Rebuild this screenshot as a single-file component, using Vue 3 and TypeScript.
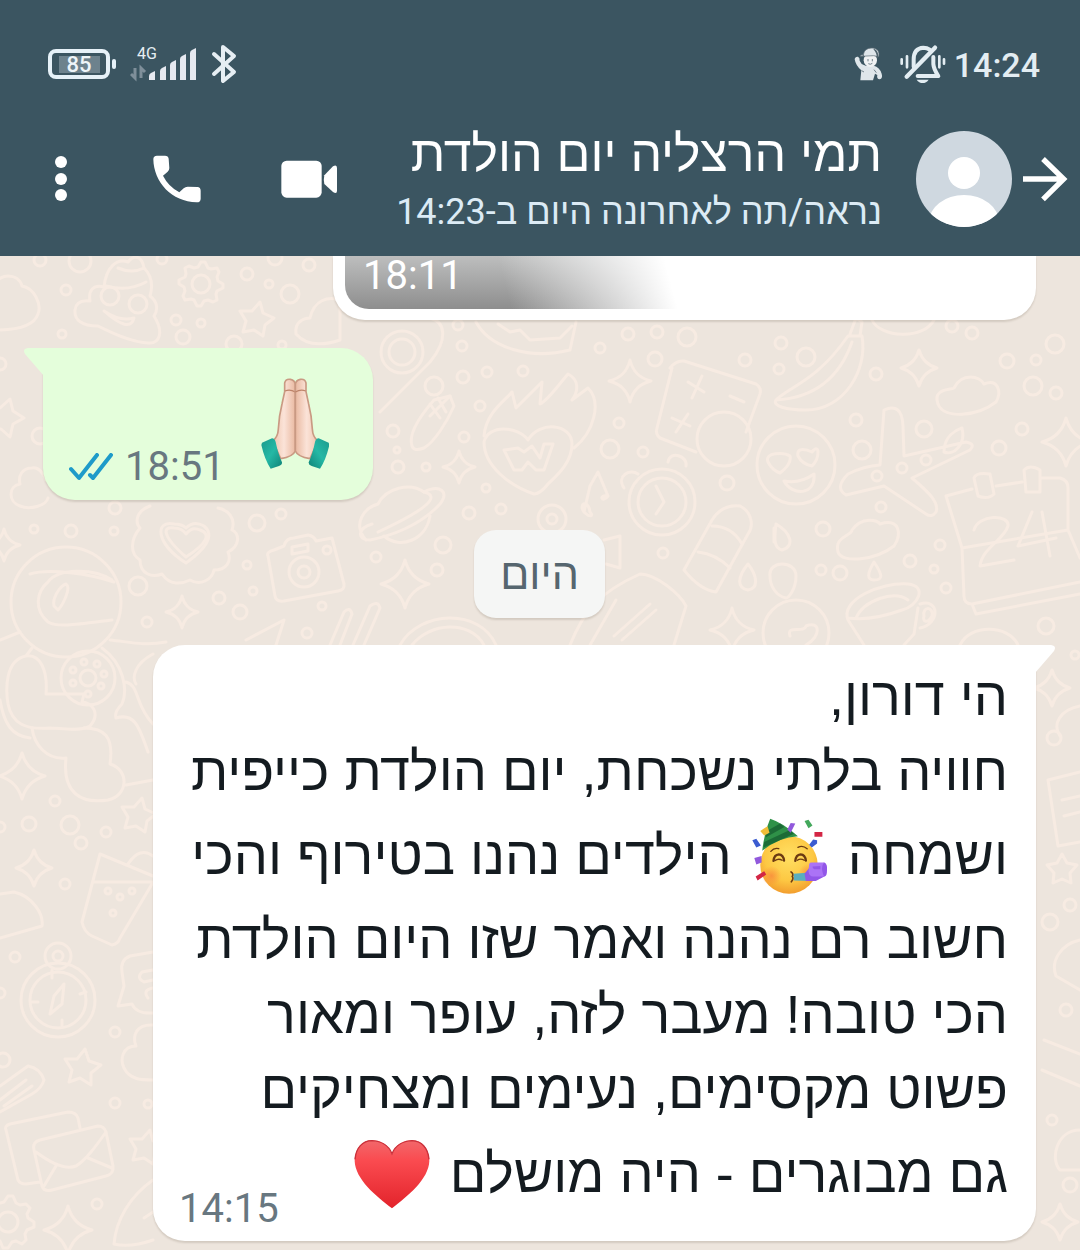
<script setup lang="ts">
type Dot = [x: number, y: number, r: number]

const contact = {
  name: 'תמי הרצליה יום הולדת',
  lastSeen: 'נראה/תה לאחרונה היום ב-14:23',
}

const signalBars: Dot[] = [
  [19, 26, 8],
  [30, 21, 13],
  [40, 15, 19],
  [50, 9, 25],
  [60, 3, 31],
]

function sparkle(x: number, y: number, r: number): string {
  const k = Math.round(r / 5)
  return `M${x} ${y - r}Q${x + k} ${y - k} ${x + r} ${y}Q${x + k} ${y + k} ${x} ${y + r}Q${x - k} ${y + k} ${x - r} ${y}Q${x - k} ${y - k} ${x} ${y - r}Z`
}

function star(x: number, y: number, r: number, turn = 0): string {
  const points: string[] = []
  for (let i = 0; i < 10; i++) {
    const a = (Math.PI / 5) * i - Math.PI / 2 + turn
    const d = i % 2 === 0 ? r : r * 0.55
    points.push(`${Math.round(x + d * Math.cos(a))} ${Math.round(y + d * Math.sin(a))}`)
  }
  return `M${points.join('L')}Z`
}

function gear(x: number, y: number, r: number, teeth: number): string {
  const points: string[] = []
  for (let i = 0; i < teeth * 4; i++) {
    const a = ((Math.PI * 2) / (teeth * 4)) * i
    const d = i % 4 < 2 ? r : r * 0.8
    points.push(`${Math.round(x + d * Math.cos(a))} ${Math.round(y + d * Math.sin(a))}`)
  }
  return `M${points.join('L')}Z`
}

const dots: Dot[] = [
  [40, 260, 6], [80, 261, 11], [162, 259, 5], [66, 290, 5], [62, 334, 4], [247, 274, 6], [269, 284, 4],
  [290, 294, 9], [309, 265, 6], [176, 320, 5], [201, 323, 4], [183, 337, 7], [275, 258, 7], [234, 344, 8],
  [282, 345, 4], [0, 364, 6], [40, 436, 8], [115, 508, 6], [34, 529, 4], [71, 531, 6], [114, 531, 4],
  [257, 523, 8], [281, 514, 5], [469, 513, 6], [443, 545, 8], [376, 557, 5], [437, 570, 6], [247, 565, 4],
  [253, 591, 4], [219, 598, 6], [240, 612, 7], [138, 586, 9], [147, 622, 5], [322, 606, 4], [307, 633, 5],
  [55, 801, 5], [29, 824, 7], [70, 825, 9], [106, 832, 5], [81, 843, 6], [0, 827, 5], [65, 884, 5],
  [15, 957, 5], [0, 993, 5], [115, 1032, 5], [3, 1060, 7], [115, 1103, 5], [148, 1104, 4], [97, 1204, 5],
  [458, 325, 5], [462, 346, 5], [463, 377, 6], [487, 372, 5], [523, 371, 5], [434, 386, 9], [480, 406, 5],
  [464, 437, 5], [393, 431, 6], [397, 450, 3], [398, 467, 6], [426, 467, 4], [486, 488, 4], [501, 509, 5],
  [552, 519, 14], [552, 519, 5], [600, 348, 5], [628, 334, 6], [657, 332, 6], [687, 337, 9], [655, 359, 7],
  [619, 423, 5], [610, 449, 9], [643, 452, 5], [663, 553, 5], [727, 483, 7], [781, 343, 6], [745, 360, 6],
  [779, 369, 5], [806, 357, 9], [876, 374, 6], [952, 326, 6], [972, 333, 6], [1055, 344, 9], [1007, 361, 7],
  [1036, 360, 5], [1033, 386, 9], [1056, 393, 6], [856, 420, 6], [862, 450, 9], [924, 429, 8], [1022, 429, 6],
  [999, 448, 7], [902, 468, 5], [926, 460, 5], [877, 476, 5], [881, 507, 5], [823, 529, 7], [940, 545, 5],
  [910, 561, 6], [934, 569, 4], [946, 588, 5], [821, 570, 5], [840, 573, 7], [1046, 626, 8], [1075, 655, 4],
  [1054, 738, 7], [1070, 905, 6], [1050, 922, 8], [1066, 1010, 6], [1052, 1120, 5], [1070, 1185, 7],
  [402, 352, 13], [402, 352, 21], [201, 284, 9], [110, 296, 9], [138, 304, 9], [662, 502, 33], [662, 502, 24],
  [796, 465, 39], [796, 633, 33], [724, 439, 27], [66, 602, 55], [88, 678, 27], [88, 678, 8], [84, 662, 3],
  [97, 664, 3], [104, 674, 3], [101, 686, 3], [73, 683, 3], [73, 670, 3], [88, 694, 3], [304, 572, 15],
  [304, 572, 6], [327, 550, 4], [58, 1000, 37], [58, 1000, 28], [58, 956, 13], [58, 956, 5], [8, 1222, 10],
  [108, 891, 3], [120, 897, 3], [132, 891, 3], [113, 913, 3],
]

const doodles: string[] = [
  'M-4 284C-2 274 18 272 22 286C34 288 42 304 38 314C34 326 18 330-4 330',
  'M104 287C106 268 116 258 128 262C134 254 142 256 144 268C152 276 153 286 150 296C158 302 158 310 154 316C164 332 160 344 148 343C130 342 110 332 98 326C82 326 74 320 75 310C76 302 82 300 90 301C88 290 94 284 104 287Z',
  'M106 286Q128 292 146 282M118 268Q132 274 144 268M104 311Q120 322 134 318Q130 334 104 311Z',
  'M296 334C294 322 304 318 310 318C314 300 328 296 340 300V340Q310 350 296 334Z',
  gear(201, 284, 22, 8),
  star(256, 320, 18, 0.2),
  star(4, 418, 20, 0.3),
  'M32 468C40 466 44 476 46 480M32 468C22 468 18 476 20 484C8 486 8 502 20 506C30 510 46 506 48 498',
  sparkle(4, 545, 16),
  'M186 557C162 536 162 526 174 528Q182 528 186 534Q192 526 200 530C212 534 206 544 186 557Z',
  'M186 563C156 544 154 520 174 524Q182 524 186 528Q194 520 204 526C216 536 204 550 186 563Z',
  'M150 506C134 512 136 524 140 528C130 540 130 554 140 560C140 574 152 578 162 574C170 586 182 584 190 580C200 586 212 580 214 570C226 570 232 562 228 552C240 546 240 534 232 530C236 518 228 510 218 508',
  'M268 556Q266 552 274 550L284 546Q286 538 294 538L308 535Q314 536 316 541L332 538L344 584Q345 590 338 591L284 601Q276 602 275 596Z',
  'M292 547L308 544V551L292 554Z',
  sparkle(182, 612, 16),
  'M246 640L284 620L276 645M330 645L344 612Q350 606 352 614L340 645M353 645L370 606Q378 600 380 608L364 645',
  sparkle(405, 584, 24),
  'M366 540C352 524 364 508 378 504C386 488 410 482 424 492C440 484 450 492 440 504C420 526 390 536 370 540C356 540 358 528 372 524',
  'M384 536C400 550 426 540 430 516M424 492C440 496 430 508 378 532',
  'M400 645C420 610 480 608 496 645M412 645C430 622 470 620 484 645',
  'M476 322C490 348 530 360 570 350L576 322M498 324L510 332L520 330L530 340L560 338L572 326',
  'M380 412L430 362C448 340 446 322 430 318',
  'M412 446C408 434 420 416 434 400L450 396L454 406C446 424 434 442 424 448Q414 452 412 446Z',
  'M430 404L440 418M438 398L446 412M430 416L450 396',
  'M484 436C486 412 506 400 512 392L516 408L542 382L540 404C548 400 556 388 568 374C580 380 578 392 572 400L588 388C602 402 594 432 574 448',
  'M534 494C510 486 484 466 484 442C488 424 518 426 528 440C540 420 572 424 572 444C572 464 554 478 548 484Q540 494 534 494Z',
  'M504 450L514 470H522L528 462L536 470H544L553 444H544L540 458L532 446L524 452L518 448Z',
  sparkle(630, 381, 21),
  sparkle(459, 467, 16),
  'M584 512C578 504 588 498 590 512C594 516 590 518 584 512L590 486L598 472L608 496C602 504 598 494 608 496',
  'M670 368Q676 360 684 361L756 384Q762 388 760 394L746 432M696 452L660 438Q655 434 657 428L672 368',
  'M688 382L704 392M702 376L692 398M672 418L690 426M688 414L676 432M730 396L744 402',
  'M624 488C616 476 630 468 638 474M668 462C670 450 688 456 686 466',
  'M656 486L664 502L656 514',
  'M684 570L712 520Q722 504 740 506C752 512 754 526 748 534L716 592Q700 590 684 570ZM712 526Q732 526 742 544M698 552Q716 554 730 568',
  'M570 645C584 610 600 592 640 574C656 574 680 594 686 606L674 645M590 645L616 600M614 636L650 604M622 640L656 610',
  'M604 540L620 536V568L606 564',
  sparkle(732, 630, 22),
  'M776 400C790 386 816 382 848 336L862 336C868 370 844 410 806 410C786 410 772 406 776 400ZM776 400C810 398 838 382 852 342M850 334L856 318L862 322L860 336',
  'M872 320C880 338 924 340 934 320',
  sparkle(919, 368, 18),
  'M938 404C932 388 952 390 954 388C962 372 980 376 984 384C998 378 1002 392 996 402C978 416 944 420 938 404Z',
  sparkle(1066, 442, 24),
  'M880 465L884 410Q902 402 903 426L904 456L966 442Q976 444 970 450L912 478C926 490 940 502 936 512Q932 518 926 514L884 486L846 495Q834 488 848 474Q864 466 880 465ZM944 452C944 436 956 430 962 428C966 444 954 456 944 452Z',
  'M774 528V542M768 462C764 452 784 452 790 456C792 464 784 470 780 473Q772 470 768 462ZM798 456C796 446 808 450 812 452C820 442 820 458 812 466Q802 464 798 456ZM784 481Q800 484 814 474C816 496 792 496 784 481Z',
  'M776 524C790 532 796 546 782 550C774 548 774 540 776 524ZM748 564C756 574 760 588 748 590C736 588 738 576 748 564ZM770 576C768 560 796 560 796 576C796 590 788 598 786 598C776 596 770 586 770 576ZM874 562C882 574 884 580 874 580C866 580 868 572 874 562Z',
  'M838 552C834 536 852 536 852 530C862 516 878 520 880 524C900 518 902 534 894 546C876 560 842 564 838 552Z',
  'M864 645L848 620C840 600 880 582 908 584C928 586 918 606 902 610C880 618 862 620 848 618M918 608L914 634L904 645M920 604C940 598 940 624 920 628M924 616C922 606 934 606 932 616C928 624 922 622 924 616ZM856 618C864 600 894 590 908 600',
  'M946 496L972 489M996 486L1022 482M1042 478H1060Q1068 480 1068 488V530L1080 558M946 496L962 548L1068 530M962 548L964 596Q964 604 972 604L1080 582M972 604L976 614L1080 594M974 478Q976 472 990 474L994 494Q988 500 978 496ZM1024 470Q1030 464 1040 470V492H1026Z',
  'M974 530C978 514 1010 514 1008 526C1004 540 982 548 980 566L1014 560M1032 512L1018 546L1056 538M1042 512L1050 556',
  'M790 636C786 624 804 634 806 626C820 620 822 636 806 645M960 645C970 624 1008 624 1018 645',
  'M30 574C50 568 90 574 114 582M112 620C80 624 58 628 48 622C34 610 36 592 48 582C58 568 94 568 112 580M54 606C52 598 60 586 66 584C72 588 62 606 58 610Z',
  'M0 640L20 632M110 640C130 642 144 646 166 642M32 648L26 656C4 660 6 692 8 704C12 724 26 730 50 728C60 728 80 732 90 726C102 712 90 702 82 702L84 694H46C48 670 40 654 26 656',
  'M32 728C34 744 46 760 66 758C62 794 82 804 108 800C128 796 130 770 110 764C114 736 104 728 84 728M0 700C4 724 12 736 30 738M102 648C124 664 128 690 122 704Q114 712 116 718C136 712 140 730 148 752M126 682C140 686 134 704 153 724M153 654C134 664 132 678 136 684M126 785L153 780',
  sparkle(22, 776, 23),
  star(138, 816, 18, 0.2),
  sparkle(34, 868, 18),
  'M0 894L14 892C32 896 44 914 42 926L0 938M100 854L82 922Q84 932 92 936L112 945Q118 944 120 938L152 884M94 882H152M100 854L153 876M128 864Q140 846 153 856',
  'M64 984L54 996L50 1014L62 1004ZM52 970V978M80 994L86 992M32 1002H38M62 1020V1026',
  'M153 952L130 956Q120 960 122 972L124 986L118 1006L132 1004Q136 1014 153 1013M153 970L142 972Q136 978 144 982L153 980M153 988Q142 990 148 998',
  'M153 1025C136 1024 132 1036 136 1046C122 1046 120 1060 124 1068C130 1080 142 1080 153 1080',
  star(82, 1068, 19, 0.15),
  'M0 1086L28 1066Q40 1068 44 1080Q42 1088 32 1094L0 1112M0 1100L26 1080M4 1106L32 1086',
  'M6 1130Q4 1126 10 1124L68 1112Q76 1112 78 1118L80 1128M6 1130L18 1180Q20 1184 26 1184L40 1182M34 1150Q32 1142 40 1140L98 1126Q104 1126 106 1132L113 1166Q114 1174 106 1176L52 1190Q44 1192 42 1186ZM36 1152C52 1164 66 1170 76 1166C86 1160 96 1146 106 1132M44 1186L56 1166M88 1158L112 1168',
  star(146, 1148, 18, 0.2),
  gear(8, 1222, 26, 8),
  sparkle(68, 1230, 24),
  'M153 1180C130 1196 116 1220 114 1244Q130 1248 153 1240M144 1218L153 1212',
  sparkle(1052, 688, 18),
  'M1080 706C1060 710 1052 724 1060 736M1080 772L1048 780L1058 846L1080 842M1062 800L1080 796M1064 816L1080 812',
  'M1080 940C1062 944 1050 960 1056 976L1080 990',
  star(1062, 870, 16),
  'M1044 1040L1080 1054M1042 1070L1080 1086',
  'M1080 1130C1056 1130 1050 1160 1060 1170H1080',
  sparkle(1060, 1222, 18),
]
</script>

<template>
  <div class="screen" dir="rtl">
    <header class="top">
      <div class="status">
        <div class="status-group">
          <time class="clock">14:24</time>
          <svg class="bell" viewBox="547 133 138 120" fill="none" stroke="#e3edf2" stroke-linecap="round">
            <path d="M588 201V180C588 156 600 145 617 144Q628 144 636 150" stroke-width="12" />
            <path d="M647 172V193Q648 208 662 229H600" stroke-width="12" stroke-linejoin="round" />
            <path d="M567 231L652 144" stroke-width="13" />
            <path d="M552 179V192M568 170V203M665 170V203M679 179V192" stroke-width="8" />
            <path d="M597 240H633Q626 250 615 250Q604 250 597 240Z" fill="#e3edf2" stroke="none" />
          </svg>
          <svg class="figure" viewBox="407 142 90 102">
            <path d="M409 179Q410 170 419 171Q425 174 424 183L430 193L442 198H466Q484 202 490 222Q494 236 484 239Q474 238 477 226L470 222L464 242H426L429 212Q412 198 409 179Z" fill="#dfe6ea" />
            <circle cx="456" cy="182" r="20" fill="#f0f2f3" />
            <path d="M435 172C434 153 446 145 461 145C477 145 485 157 481 171L466 168L426 170Q426 164 435 166Z" fill="#dfe6ea" stroke="#56666f" stroke-width="2" />
            <path d="M468 148Q480 153 480 171L476 176Q475 158 465 149Z" fill="#4f626c" />
            <path d="M449 178V185M462 178V185M450 192Q456 196 462 191M430 213L437 217M467 210L474 219" fill="none" stroke="#71818a" stroke-width="3" />
          </svg>
        </div>
        <div class="status-group status-left">
          <svg class="bluetooth" viewBox="0 0 26 40" fill="none" stroke="#e6eef3" stroke-width="4" stroke-linejoin="round" stroke-linecap="round">
            <path d="M3 10L23 28L12 37V3L23 12L3 30" />
          </svg>
          <svg class="signal" viewBox="0 -3 68 42">
            <text x="7" y="13" class="network">4G</text>
            <path v-for="[x, y, h] in signalBars" :key="x" :d="`M${x} ${y + h}V${y + 4}Q${x} ${y + 2} ${x + 2} ${y + 1}L${x + 6} ${y - 1}V${y + h}Z`" fill="#e6e9f0" />
            <path d="M5 22V32L1 28M11 32V22L15 26" fill="none" stroke="#7f8f9a" stroke-width="3" />
          </svg>
          <div class="battery"><span class="level">85</span></div>
        </div>
      </div>

      <div class="bar">
        <button class="icon-button" type="button" aria-label="חזרה">
          <svg width="46" height="48" viewBox="906 465 138 144" fill="none" stroke="#fff" stroke-width="16">
            <path d="M909 537H1032M969 477L1031 537L969 598" />
          </svg>
        </button>
        <svg class="avatar" viewBox="0 0 96 96">
          <defs><clipPath id="disc"><circle cx="48" cy="48" r="48" /></clipPath></defs>
          <g clip-path="url(#disc)">
            <rect width="96" height="96" fill="#cfd8e0" />
            <circle cx="48" cy="42" r="16" fill="#fff" />
            <ellipse cx="48" cy="91" rx="35" ry="27" fill="#fff" />
          </g>
        </svg>
        <div class="who">
          <h1 class="name">{{ contact.name }}</h1>
          <p class="seen">{{ contact.lastSeen }}</p>
        </div>
        <nav class="actions">
          <button class="icon-button" type="button" aria-label="שיחת וידאו">
            <svg width="56" height="38" viewBox="843 484 168 114" fill="#fff">
              <rect x="844" y="486" width="121" height="111" rx="16" />
              <path d="M973 530L999 503Q1011 496 1011 508V576Q1011 588 999 580L973 556Q970 543 973 530Z" />
            </svg>
          </button>
          <button class="icon-button" type="button" aria-label="שיחה">
            <svg width="48" height="48" viewBox="459 469 144 144" fill="#fff">
              <path d="M471 471H495Q505 471 506 480L508 508Q508 514 503 519L489 531Q505 563 538 581L551 569Q556 564 563 564L592 565Q602 566 602 576V600Q602 611 590 611C515 610 461 550 460 482Q460 471 471 471Z" />
            </svg>
          </button>
          <button class="icon-button" type="button" aria-label="עוד אפשרויות">
            <svg width="24" height="48" viewBox="0 0 24 48" fill="#fff">
              <circle cx="12" cy="7" r="6" /><circle cx="12" cy="24" r="6" /><circle cx="12" cy="40" r="6" />
            </svg>
          </button>
        </nav>
      </div>
    </header>

    <main class="chat">
      <svg class="wallpaper" viewBox="0 256 1080 994" preserveAspectRatio="xMidYMin slice" aria-hidden="true">
        <circle v-for="([x, y, r], i) in dots" :key="'c' + i" :cx="x" :cy="y" :r="r" />
        <path v-for="(d, i) in doodles" :key="'d' + i" :d="d" />
      </svg>

      <article class="bubble photo">
        <div class="picture"><time class="stamp stamp-light">18:11</time></div>
      </article>

      <article class="bubble sent">
        <svg class="tail tail-left" viewBox="0 0 20 28"><path d="M20 0H4Q-2 1 1 6L20 28Z" fill="#e4fedb" /></svg>
        <svg class="hands" viewBox="47 37 204 273" role="img" aria-label="ידיים בתפילה">
          <defs>
            <linearGradient id="skin" x1="0" x2="1"><stop offset="0" stop-color="#efc4ad" /><stop offset=".5" stop-color="#fbe3d8" /><stop offset="1" stop-color="#e9b9a1" /></linearGradient>
            <linearGradient id="cuff" x1="0" x2="1" y2="1"><stop offset="0" stop-color="#1c9a8c" /><stop offset=".5" stop-color="#25b8a5" /><stop offset="1" stop-color="#0f8277" /></linearGradient>
            <g id="palm">
              <path d="M118 78V52Q121 39 135 41Q149 44 150 56V256Q143 273 106 279L82 226Q98 214 99 190Q101 150 110 115Z" fill="url(#skin)" stroke="#c99a83" stroke-width="5" />
              <path d="M119 76Q134 70 150 79" fill="none" stroke="#bd8369" stroke-width="4" />
              <path d="M50 231L80 218Q88 218 91 229Q98 264 110 290Q111 298 101 301L76 309Q58 282 48 238Z" fill="url(#cuff)" />
            </g>
          </defs>
          <use href="#palm" />
          <use href="#palm" transform="translate(300 0) scale(-1 1)" />
        </svg>
        <div class="meta">
          <time class="stamp">18:51</time>
          <svg class="ticks" viewBox="0 0 44 28" fill="none" stroke="#1e9bc9" stroke-width="4" stroke-linecap="round" stroke-linejoin="round" role="img" aria-label="נקרא">
            <path d="M2 16L10 25L28 2M21 22L24 25L42 2" />
          </svg>
        </div>
      </article>

      <div class="day">היום</div>

      <article class="bubble received">
        <svg class="tail tail-right" viewBox="0 0 20 28"><path d="M0 0H16Q22 1 19 6L0 28Z" fill="#fff" /></svg>
        <p class="line">הי דורון,</p>
        <p class="line">חוויה בלתי נשכחת, יום הולדת כייפית</p>
        <p class="line tall">
          <span>ושמחה</span>
          <svg class="emoji" viewBox="38 45 228 230" role="img" aria-label="פרצוף חוגג">
            <defs>
              <radialGradient id="face" cx=".5" cy=".35" r=".7"><stop offset="0" stop-color="#ffe063" /><stop offset=".6" stop-color="#fdc843" /><stop offset="1" stop-color="#f0952a" /></radialGradient>
              <radialGradient id="cheek"><stop offset="0" stop-color="#f98a3c" stop-opacity=".8" /><stop offset="1" stop-color="#f98a3c" stop-opacity="0" /></radialGradient>
            </defs>
            <circle cx="149" cy="187" r="87" fill="url(#face)" />
            <circle cx="96" cy="220" r="30" fill="url(#cheek)" />
            <circle cx="206" cy="212" r="28" fill="url(#cheek)" />
            <path d="M92 47Q132 60 176 100Q120 102 68 144Q74 90 92 47Z" fill="#2f9148" />
            <path d="M82 84L122 62L135 72L78 104ZM74 118L150 82L164 93L72 134Z" fill="#1c6b36" />
            <g fill="none" stroke="#6b3a12" stroke-linecap="round">
              <path d="M102 175Q104 156 118 155Q132 156 134 174M168 175Q170 156 184 155Q198 156 200 174" stroke-width="7" />
              <path d="M106 174Q118 166 128 173M174 173Q184 166 195 173" stroke-width="4" />
              <path d="M94 146Q104 134 118 138M176 134Q190 126 204 138" stroke-width="4" />
              <path d="M155 208Q164 214 159 222Q164 228 156 238" stroke-width="5" />
            </g>
            <path d="M163 214L212 210V236L164 234Z" fill="#5aaebf" />
            <path d="M196 214L210 196L256 180Q266 184 264 204Q264 222 256 222L230 236H200Z" fill="#9257e8" />
            <path d="M210 184Q212 179 220 180H256Q246 190 250 206Q252 220 258 222H222Q210 222 208 206Z" fill="#ab73f6" />
            <path d="M220 192L244 190V200H226Q220 198 220 192Z" fill="#9257e8" />
            <path d="M62 84L84 70L90 90L74 98Z" fill="#f0bd38" />
            <path d="M144 80L154 60L168 62L154 90Z M44 166L66 160V180L50 186Z" fill="#9159dc" />
            <path d="M196 54L208 50L220 68L208 76Z" fill="#43a85c" />
            <path d="M226 87H250V102H226ZM48 222L74 206L80 216L54 234Z" fill="#d32645" />
            <path d="M38 112L50 108L64 128L50 134ZM210 126L222 110L234 112V122L218 134Z" fill="#3b5cd0" />
          </svg>
          <span>הילדים נהנו בטירוף והכי</span>
        </p>
        <p class="line">חשוב רם נהנה ואמר שזו היום הולדת</p>
        <p class="line">הכי טובה! מעבר לזה, עופר ומאור</p>
        <p class="line">פשוט מקסימים, נעימים ומצחיקים</p>
        <div class="last">
          <p class="line tall">
            <span>גם מבוגרים - היה מושלם</span>
            <svg class="emoji" viewBox="54 54 228 210" role="img" aria-label="לב">
              <defs>
                <linearGradient id="love" x2="0" y2="1"><stop offset="0" stop-color="#f2686b" /><stop offset=".3" stop-color="#fa4b50" /><stop offset="1" stop-color="#e3232b" /></linearGradient>
              </defs>
              <path d="M168 100C158 68 130 57 108 57C76 58 56 85 56 120C58 175 120 225 168 262C215 225 278 175 280 120C280 85 260 58 228 57C206 57 178 68 168 100Z" fill="url(#love)" />
              <path d="M57 115C60 80 80 59 108 59C130 60 157 70 168 98C179 70 206 60 228 59C256 60 276 80 279 115" fill="none" stroke="#c9303a" stroke-width="4" />
            </svg>
          </p>
          <time class="stamp">14:15</time>
        </div>
      </article>
    </main>
  </div>
</template>

<style>
body {
  margin: 0;
}
</style>

<style scoped>
.screen {
  display: flex;
  flex-direction: column;
  min-height: 100vh;
  font-family: 'Liberation Sans', 'DejaVu Sans', sans-serif;
}

h1,
p {
  margin: 0;
  font-weight: 400;
}

svg {
  display: block;
  direction: ltr;
  flex: none;
}

.top {
  background: #3b5561;
  color: #fff;
  height: 256px;
  display: flex;
  flex-direction: column;
}

.status {
  display: flex;
  justify-content: space-between;
  align-items: center;
  height: 104px;
  padding: 24px 40px 0 48px;
  box-sizing: border-box;
}

.status-group {
  display: flex;
  align-items: center;
  gap: 8px;
}

.status-left {
  gap: 13px;
}

.clock {
  padding-top: 2px;
  font: 500 34px/40px Roboto, sans-serif;
  color: #e3edf2;
}

.bell {
  width: 46px;
  height: 40px;
}

.figure {
  width: 30px;
  height: 34px;
  margin-right: 8px;
}

.bluetooth {
  width: 26px;
  height: 40px;
}

.signal {
  width: 68px;
  height: 42px;
}

.network {
  font: 16px Roboto, sans-serif;
  fill: #e6eef3;
}

.battery {
  position: relative;
  display: flex;
  align-items: center;
  justify-content: center;
  width: 62px;
  height: 30px;
  margin-right: 7px;
  border: 4px solid #e6f1f8;
  border-radius: 8px;
  box-sizing: border-box;
}

.battery::after {
  content: '';
  position: absolute;
  left: 60px;
  top: 6px;
  width: 4px;
  height: 10px;
  border-radius: 2px;
  background: #e6f1f8;
}

.level {
  padding: 0 8px;
  background: #6d828d;
  font: 500 22px/17px Roboto, sans-serif;
  color: #eef5f9;
}

.bar {
  flex: 1;
  display: flex;
  align-items: center;
  padding: 0 12px 2px 49px;
}

.icon-button {
  display: block;
  padding: 0;
  border: 0;
  background: none;
}

.avatar {
  width: 96px;
  height: 96px;
  margin-right: 10px;
}

.who {
  flex: 1;
  min-width: 0;
  padding: 2px 34px 0 0;
  white-space: nowrap;
}

.name {
  font-size: 50px;
  line-height: 64px;
}

.seen {
  font-family: Roboto, 'Liberation Sans', sans-serif;
  font-size: 36px;
  line-height: 52px;
  color: #dcebf5;
}

.actions {
  display: flex;
  align-items: center;
  gap: 80px;
}

.chat {
  position: relative;
  flex: 1;
  display: flex;
  flex-direction: column;
  align-items: flex-start;
  padding: 0 44px 9px 43px;
  background: #ede5dd;
}

.wallpaper {
  position: absolute;
  inset: 0;
  width: 100%;
  height: 100%;
  fill: none;
  stroke: #f7ebe2;
  stroke-width: 3;
  stroke-linejoin: round;
  stroke-linecap: round;
}

.bubble {
  position: relative;
  border-radius: 32px;
  background: #fff;
  box-shadow: 0 2px 2px rgba(60, 40, 20, 0.14);
}

.photo {
  width: 100%;
  max-width: 703px;
  padding: 0 12px 11px;
  box-sizing: border-box;
  border-radius: 0 0 32px 32px;
}

.picture {
  display: flex;
  justify-content: flex-end;
  height: 53px;
  padding-left: 18px;
  border-radius: 0 0 24px 24px;
  background:
    linear-gradient(75deg, rgba(255, 255, 255, 0) 24%, #fff 48%),
    linear-gradient(#bdbebe, #8e8e8e);
}

.stamp {
  font: 40px/40px Roboto, sans-serif;
  color: #687780;
}

.stamp-light {
  color: #fff;
}

.sent {
  align-self: flex-end;
  display: flex;
  align-items: flex-end;
  justify-content: space-between;
  width: 330px;
  height: 152px;
  margin-top: 28px;
  padding: 0 44px 13px 26px;
  box-sizing: border-box;
  border-top-left-radius: 0;
  background: #e4fedb;
}

.hands {
  width: 68px;
  height: 91px;
  align-self: flex-start;
  margin-top: 30px;
}

.meta {
  display: flex;
  align-items: center;
  gap: 12px;
}

.ticks {
  width: 44px;
  height: 28px;
}

.tail {
  position: absolute;
  top: 0;
  width: 20px;
  height: 28px;
}

.tail-left {
  left: -19px;
}

.tail-right {
  right: -19px;
}

.day {
  position: relative;
  align-self: center;
  margin: 30px 0 27px;
  padding: 0 26px;
  border-radius: 22px;
  background: #f5f6f5;
  box-shadow: 0 2px 2px rgba(60, 40, 20, 0.14);
  font-size: 43px;
  line-height: 88px;
  color: #56666f;
}

.received {
  width: 100%;
  max-width: 883px;
  padding: 14px 28px 12px 26px;
  box-sizing: border-box;
  border-top-right-radius: 0;
}

.line {
  font-size: 54px;
  line-height: 75px;
  color: #141b20;
  white-space: nowrap;
}

.tall {
  display: flex;
  align-items: center;
  gap: 20px;
  height: 93px;
}

.emoji {
  width: 76px;
  height: 76px;
}

.last {
  display: flex;
  justify-content: space-between;
  align-items: flex-end;
  height: 102px;
}

.last .tall {
  align-self: flex-start;
}
</style>
